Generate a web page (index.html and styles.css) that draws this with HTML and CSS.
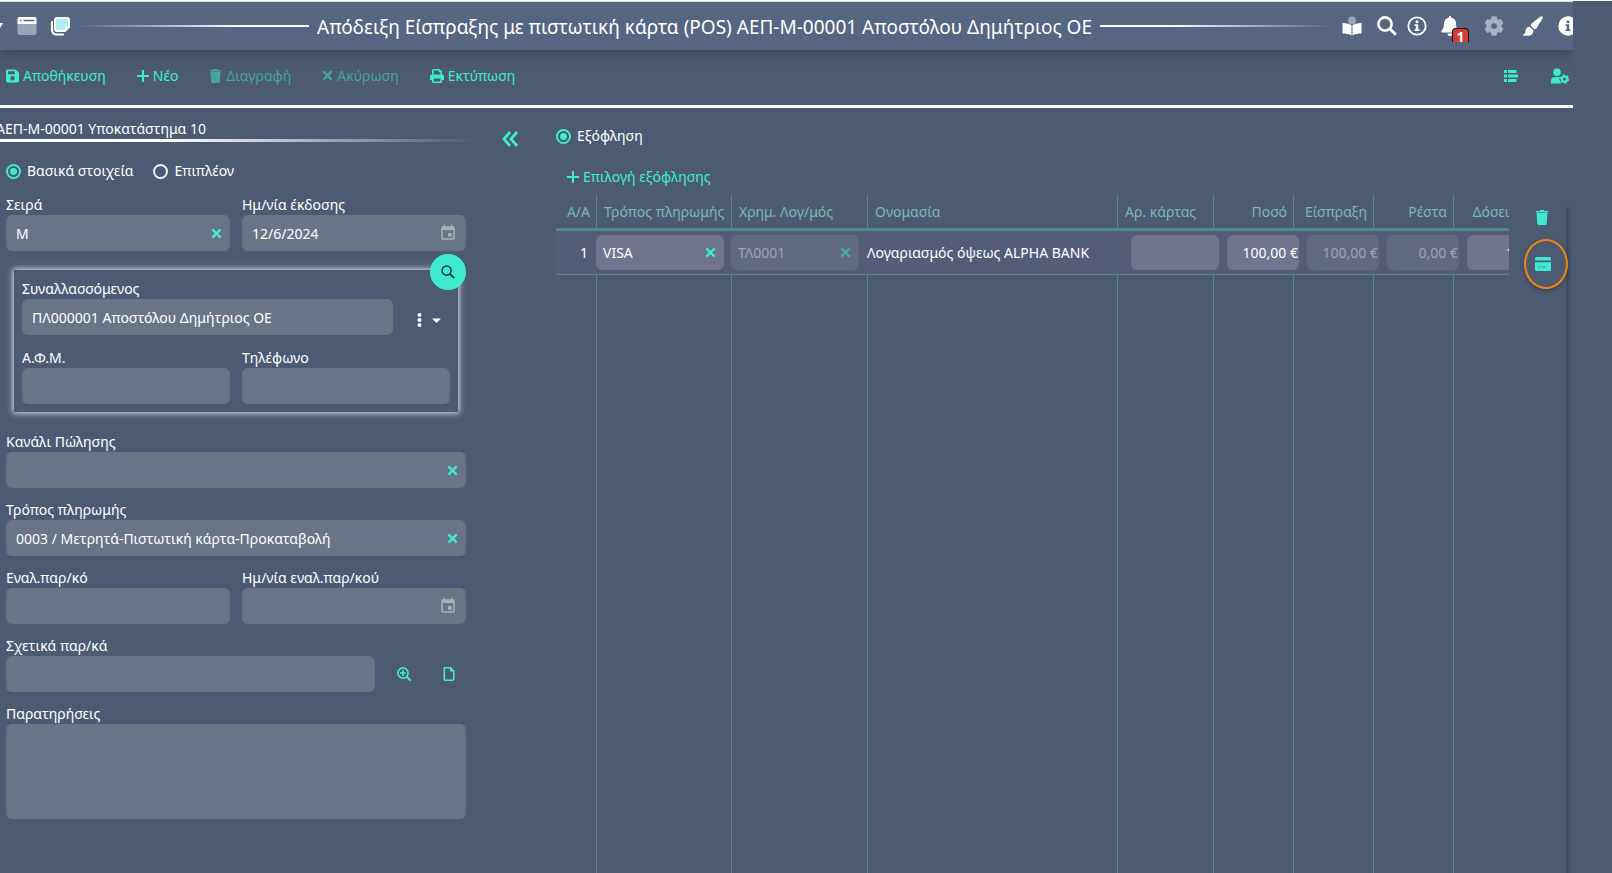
FILE: index.html
```html
<!DOCTYPE html>
<html lang="el">
<head>
<meta charset="utf-8">
<title>Απόδειξη Είσπραξης</title>
<link rel="stylesheet" href="styles.css">
</head>
<body>
<svg class="defs" aria-hidden="true">
  <symbol id="times" viewBox="0 0 12 12"><path d="M1.500 1.500l9 9M10.500 1.500l-9 9" stroke="currentColor" stroke-width="2.600" fill="none"/></symbol>
  <symbol id="plus" viewBox="0 0 12 12"><path d="M6 0.5v11M0.500 6h11" stroke="currentColor" stroke-width="2" fill="none" stroke-linecap="round"/></symbol>
  <symbol id="trash" viewBox="0 0 14 16"><path fill="currentColor" d="M.5 1h4l.6-1h3.800l.6 1h4v1.600H.5zM1.200 3.200h11.600l-.8 11.300a1.500 1.500 0 0 1-1.500 1.500H3.500A1.500 1.500 0 0 1 2 14.500z"/></symbol>
  <symbol id="calendar" viewBox="0 0 24 24"><path fill="currentColor" d="M17 12h-5v5h5v-5zM16 1v2H8V1H6v2H5c-1.110 0-1.990.9-1.990 2L3 19c0 1.100.89 2 2 2h14c1.100 0 2-.9 2-2V5c0-1.100-.9-2-2-2h-1V1h-2zm3 18H5V8h14v11z"/></symbol>
  <symbol id="search" viewBox="0 0 20 20"><circle cx="8" cy="8" r="6.600" fill="none" stroke="currentColor" stroke-width="2.600"/><path d="M12.800 12.800l6 6" stroke="currentColor" stroke-width="3"/></symbol>
</svg>

<header class="titlebar">
  <div class="title-left">
    <svg class="edge-caret" viewBox="0 0 3 6"><path d="M0 0h3L0 5z" fill="#fff"/></svg>
    <button class="icon-btn" aria-label="Παράθυρο"><svg viewBox="0 0 20 20"><rect x=".5" y="1" width="19" height="18" rx="2" fill="#9ba5b9"/><path d="M.5 8V3a2 2 0 0 1 2-2h15a2 2 0 0 1 2 2v5z" fill="#fff"/><path d="M3 4.500h1.500M6.500 4.500H17" stroke="#566582" stroke-width="1.600"/></svg></button>
    <button class="icon-btn" aria-label="Αντίγραφα"><svg viewBox="0 0 20 20"><path d="M2 6v8a4.500 4.500 0 0 0 4.500 4.500H13" fill="none" stroke="#fff" stroke-width="2.200" stroke-linecap="round"/><path d="M7 2h10a2 2 0 0 1 2 2v7l-4 4H7a2 2 0 0 1-2-2V4a2 2 0 0 1 2-2z" fill="#aeeef3" stroke="#fff" stroke-width="2"/><path d="M19 10.500h-4V15z" fill="#fff"/></svg></button>
  </div>
  <div class="title-mid">
    <span class="rule rule-in"></span>
    <h1 class="title">Απόδειξη Είσπραξης με πιστωτική κάρτα (POS) ΑΕΠ-Μ-00001 Αποστόλου Δημήτριος ΟΕ</h1>
    <span class="rule rule-out"></span>
  </div>
  <nav class="title-right">
    <button class="icon-btn at-book" aria-label="Οδηγός"><svg viewBox="0 0 20 20"><circle cx="10" cy="4.500" r="4" fill="#9ba5b9"/><path d="M.5 7c4 0 7 1 9 2.200V19.500C7 18 4 17.500.5 17.500zM19.500 7c-4 0-7 1-9 2.200V19.500c2.500-1.500 5.500-2 9-2z" fill="#fff"/></svg></button>
    <button class="icon-btn at-search" aria-label="Αναζήτηση"><svg viewBox="0 0 20 20"><use href="#search"/></svg></button>
    <button class="icon-btn at-info" aria-label="Πληροφορίες"><svg viewBox="0 0 20 20"><circle cx="10" cy="10" r="8.700" fill="none" stroke="#fff" stroke-width="1.800"/><circle cx="10" cy="5.800" r="1.500" fill="#fff"/><path d="M7.600 8.300h3.600v5h1.200v1.600H7.600v-1.600h1.200V9.900H7.600z" fill="#fff"/></svg></button>
    <button class="icon-btn at-bell" aria-label="Ειδοποιήσεις"><svg viewBox="0 0 20 20"><path d="M9 0h2v1.600c3 .5 5 2.900 5 6 0 4 1 5.600 2.400 7.100.6.700.2 1.800-.8 1.800H2.400c-1 0-1.400-1.100-.8-1.800C3 13.200 4 11.600 4 7.600c0-3.100 2-5.500 5-6zM7.500 17.500h5a2.500 2.500 0 0 1-5 0z" fill="#fff"/></svg><span class="badge">1</span></button>
    <button class="icon-btn at-gear" aria-label="Ρυθμίσεις"><svg viewBox="0 0 24 24"><path fill="#a9b1c1" stroke="#a9b1c1" stroke-linejoin="round" fill-rule="evenodd" d="M9.300 1h5.400l.6 3 1.900 1.100 2.900-1 2.700 4.700-2.300 2v2.400l2.300 2-2.700 4.700-2.900-1-1.900 1.100-.6 3H9.300l-.6-3-1.900-1.100-2.900 1-2.700-4.700 2.300-2v-2.400l-2.300-2 2.700-4.700 2.900 1L8.700 4zM12 8a4 4 0 1 0 0 8 4 4 0 0 0 0-8z"/></svg></button>
    <button class="icon-btn at-brush" aria-label="Θέμα"><svg viewBox="0 0 20 20"><path fill="#fff" d="M19.300.5c.7.600.7 1.300.3 2.100L14 11.400c-.7 1-1.500 1.500-2.600 1.800L7.600 9.600c.3-1 .8-1.700 1.700-2.500L17.500.5c.6-.5 1.200-.5 1.800 0zM6.600 10.700l3.800 3.500c0 3.600-2.300 5.600-5.700 5.600H.8c-.8 0-.9-1.200-.2-1.500 1.400-.6 1.800-1.300 1.900-3 .1-2.800 1.600-4.600 4.100-4.600z"/></svg></button>
    <button class="icon-btn at-help" aria-label="Βοήθεια"><svg viewBox="0 0 20 20"><circle cx="10" cy="10" r="9.700" fill="#fff"/><circle cx="10" cy="5.800" r="1.500" fill="#566582"/><path d="M7.600 8.300h3.600v5h1.200v1.600H7.600v-1.600h1.200V9.900H7.600z" fill="#566582"/></svg></button>
  </nav>
</header>

<div class="toolbar">
  <button class="tool"><svg class="i13" viewBox="0 0 14 14"><path fill="currentColor" fill-rule="evenodd" d="M1.500 0h8.700L14 3.600v8.900a1.500 1.500 0 0 1-1.500 1.500h-11A1.500 1.500 0 0 1 0 12.500v-11A1.500 1.500 0 0 1 1.500 0zM2.200 2v3h7.400V2zM7 7a2.400 2.400 0 1 0 0 4.800A2.400 2.400 0 0 0 7 7z"/></svg>Αποθήκευση</button>
  <button class="tool"><svg class="i12" viewBox="0 0 12 12"><use href="#plus"/></svg>Νέο</button>
  <button class="tool" disabled><svg class="i13" viewBox="0 0 14 16"><use href="#trash"/></svg>Διαγραφή</button>
  <button class="tool" disabled><svg class="i10" viewBox="0 0 12 12"><use href="#times"/></svg>Ακύρωση</button>
  <button class="tool"><svg class="i14" viewBox="0 0 14 14"><path fill="currentColor" fill-rule="evenodd" d="M2 5.500V1.500A1.500 1.500 0 0 1 3.500 0h6L12 2.400v3.100h.3A1.700 1.700 0 0 1 14 7.200V11h-2v1.700a1.300 1.300 0 0 1-1.300 1.300H3.300A1.300 1.300 0 0 1 2 12.700V11H0V7.200a1.700 1.700 0 0 1 1.700-1.700zM3.600 1.600v3.900h6.800V3.200H8.800V1.600zM3.600 9.500v2.900h6.800V9.500z"/></svg>Εκτύπωση</button>
  <div class="tool-right">
    <button class="plain" aria-label="Λίστα"><svg class="i14" viewBox="0 0 14 14"><path fill="currentColor" d="M0 1h3v3H0zM4 1h8.500v3H4zM0 5.500h3v3H0zM4 5.500h10v3H4zM0 10h3v3H0zM4 10h8.500v3H4z"/></svg></button>
    <button class="plain" aria-label="Ρυθμίσεις χρήστη"><svg class="i18" viewBox="0 0 18 16"><circle cx="6" cy="4.300" r="3.800" fill="currentColor"/><path fill="currentColor" d="M0 15.500v-2.500A4 4 0 0 1 4 9h5l-.8 2.500 2 4z"/><circle cx="13.500" cy="11" r="2.700" fill="none" stroke="currentColor" stroke-width="2.200"/><circle cx="13.500" cy="11" r="4" fill="none" stroke="currentColor" stroke-width="1.400" stroke-dasharray="2 2.190"/></svg></button>
  </div>
</div>

<main class="main">
  <section class="form">
    <h2 class="doc-title"><span>ΑΕΠ-Μ-00001 Υποκατάστημα 10</span></h2>
    <div class="doc-rule"></div>
    <div class="radios">
      <label class="radio"><input type="radio" name="tab" checked>Βασικά στοιχεία</label>
      <label class="radio"><input type="radio" name="tab">Επιπλέον</label>
    </div>
    <div class="row">
      <div class="field"><label for="series">Σειρά</label><div class="box"><input id="series" value="M"><button class="clear" aria-label="Καθαρισμός"><svg class="i10" viewBox="0 0 12 12"><use href="#times"/></svg></button></div></div>
      <div class="field"><label for="date">Ημ/νία έκδοσης</label><div class="box"><input id="date" value="12/6/2024"><button class="cal" aria-label="Ημερολόγιο"><svg class="i18" viewBox="0 0 24 24"><use href="#calendar"/></svg></button></div></div>
    </div>
    <div class="partner">
      <button class="fab" aria-label="Αναζήτηση συναλλασσόμενου"><svg class="i14" viewBox="0 0 20 20"><circle cx="8" cy="8" r="6.500" fill="none" stroke="#17333a" stroke-width="2.200"/><path d="M12.800 12.800l6 6" stroke="#17333a" stroke-width="2.600"/></svg></button>
      <div class="row partner-top">
        <div class="field"><label for="partner">Συναλλασσόμενος</label><div class="box"><input id="partner" value="ΠΛ000001 Αποστόλου Δημήτριος ΟΕ"></div></div>
        <button class="more" aria-label="Περισσότερα"><svg class="more-icon" viewBox="0 0 24 14"><g fill="#fff"><circle cx="2.500" cy="2" r="2"/><circle cx="2.500" cy="7" r="2"/><circle cx="2.500" cy="12" r="2"/><path d="M15 5.500h9L19.500 10z"/></g></svg></button>
      </div>
      <div class="row">
        <div class="field"><label for="afm">Α.Φ.Μ.</label><div class="box"><input id="afm"></div></div>
        <div class="field"><label for="tel">Τηλέφωνο</label><div class="box"><input id="tel"></div></div>
      </div>
    </div>
    <div class="stack">
      <div class="field"><label for="channel">Κανάλι Πώλησης</label><div class="box"><input id="channel"><button class="clear" aria-label="Καθαρισμός"><svg class="i10" viewBox="0 0 12 12"><use href="#times"/></svg></button></div></div>
      <div class="field"><label for="pay">Τρόπος πληρωμής</label><div class="box"><input id="pay" value="0003 / Μετρητά-Πιστωτική κάρτα-Προκαταβολή"><button class="clear" aria-label="Καθαρισμός"><svg class="i10" viewBox="0 0 12 12"><use href="#times"/></svg></button></div></div>
      <div class="row">
        <div class="field"><label for="alt">Εναλ.παρ/κό</label><div class="box"><input id="alt"></div></div>
        <div class="field"><label for="altdate">Ημ/νία εναλ.παρ/κού</label><div class="box"><input id="altdate"><button class="cal" aria-label="Ημερολόγιο"><svg class="i18" viewBox="0 0 24 24"><use href="#calendar"/></svg></button></div></div>
      </div>
      <div class="row related">
        <div class="field"><label for="rel">Σχετικά παρ/κά</label><div class="box"><input id="rel"></div></div>
        <div class="related-actions">
          <button class="plain" aria-label="Προβολή"><svg class="i14" viewBox="0 0 14 14"><circle cx="6" cy="6" r="5.100" fill="none" stroke="currentColor" stroke-width="1.600"/><path d="M6 3v6M3 6h6" stroke="currentColor" stroke-width="1.500"/><path d="M9.600 9.600l4 4" stroke="currentColor" stroke-width="2"/></svg></button>
          <button class="plain" aria-label="Νέο έγγραφο"><svg class="i14" viewBox="0 0 14 14"><path d="M2.300.8H8.700L11.700 4v8.200a1 1 0 0 1-1 1H3.300a1 1 0 0 1-1-1z" fill="none" stroke="currentColor" stroke-width="1.600"/><path d="M8 0v4.600h4.500z" fill="currentColor"/></svg></button>
        </div>
      </div>
      <div class="field"><label for="notes">Παρατηρήσεις</label><textarea id="notes"></textarea></div>
    </div>
  </section>

  <div class="splitter"><button class="plain" aria-label="Σύμπτυξη"><svg class="i16" viewBox="0 0 16 16"><path d="M8 1L2 8l6 7M15 1L9 8l6 7" fill="none" stroke="currentColor" stroke-width="2.800"/></svg></button></div>

  <section class="grid-panel">
    <label class="radio"><input type="radio" name="grid" checked>Εξόφληση</label>
    <button class="tool add"><svg class="i12" viewBox="0 0 12 12"><use href="#plus"/></svg>Επιλογή εξόφλησης</button>
    <div class="grid-body">
      <div class="table-wrap">
        <table class="grid">
          <colgroup><col class="c40"><col class="c135"><col class="c136"><col class="c250"><col class="c96"><col class="c80"><col class="c80"><col class="c80"><col class="c72"></colgroup>
          <thead><tr><th class="num">Α/Α</th><th>Τρόπος πληρωμής</th><th>Χρημ. Λογ/μός</th><th>Ονομασία</th><th>Αρ. κάρτας</th><th class="num">Ποσό</th><th class="num">Είσπραξη</th><th class="num">Ρέστα</th><th class="num">Δόσεις</th></tr></thead>
          <tbody>
            <tr class="data">
              <td class="num">1</td>
              <td><div class="cell w128"><input aria-label="Τρόπος πληρωμής" value="VISA"><button class="clear" aria-label="Καθαρισμός"><svg class="i10" viewBox="0 0 12 12"><use href="#times"/></svg></button></div></td>
              <td><div class="cell w128 off"><input aria-label="Χρηματικός λογαριασμός" value="ΤΛ0001" disabled><button class="clear" aria-label="Καθαρισμός" disabled><svg class="i10" viewBox="0 0 12 12"><use href="#times"/></svg></button></div></td>
              <td>Λογαριασμός όψεως ALPHA BANK</td>
              <td class="inset"><div class="cell w88"><input aria-label="Αριθμός κάρτας"></div></td>
              <td class="inset"><div class="cell w72 amount"><input aria-label="Ποσό" value="100,00 €"></div></td>
              <td class="inset"><div class="cell w72 amount off"><input aria-label="Είσπραξη" value="100,00 €" disabled></div></td>
              <td class="inset"><div class="cell w72 amount off"><input aria-label="Ρέστα" value="0,00 €" disabled></div></td>
              <td class="inset"><div class="cell w48 amount"><input aria-label="Δόσεις" value="1"></div></td>
            </tr>
            <tr class="filler"><td></td><td></td><td></td><td></td><td></td><td></td><td></td><td></td><td></td></tr>
          </tbody>
        </table>
      </div>
      <div class="row-actions">
        <button class="plain" aria-label="Διαγραφή γραμμής"><svg class="i16" viewBox="0 0 16 16"><use href="#trash" width="14" height="15"/></svg></button>
        <button class="plain marked" aria-label="Πληρωμή με κάρτα"><svg class="i16" viewBox="0 0 16 14"><path fill="currentColor" d="M1.500 0h13A1.500 1.500 0 0 1 16 1.500V3.500H0V1.500A1.500 1.500 0 0 1 1.500 0zM0 5.200h16v7.300a1.500 1.500 0 0 1-1.500 1.500h-13A1.500 1.500 0 0 1 0 12.500z"/><path d="M3 10h3M7 10h4" stroke="#2aa59b"/></svg></button>
      </div>
    </div>
  </section>
</main>
</body>
</html>
```
FILE: styles.css
```css
*, ::before, ::after { box-sizing: border-box; }
body {
  margin: 0;
  height: 100vh;
  min-height: 860px;
  display: flex;
  flex-direction: column;
  overflow: hidden;
  border-top: 1px solid #fff;
  background: #4d5a73;
  color: #fff;
  font-family: "Noto Sans", "Open Sans", sans-serif;
  font-size: 14px;
  line-height: 20px;
}
button, input, textarea { font: inherit; color: inherit; }
button { background: none; border: 0; padding: 0; display: inline-flex; align-items: center; }
svg { display: block; flex: none; }
.defs { position: absolute; width: 0; height: 0; }
.i10 { width: 11px; height: 11px; }
.i12 { width: 12px; height: 12px; }
.i13 { width: 13px; height: 14px; }
.i14 { width: 14px; height: 14px; }
.i16 { width: 16px; height: 16px; }
.i18 { width: 18px; height: 18px; }

.titlebar {
  flex: none;
  height: 49px;
  margin-right: 39px;
  display: flex;
  align-items: center;
  overflow: hidden;
  background: #566582;
  border-top: 1px solid #d5dae3;
  box-shadow: 0 2px 14px rgba(40, 48, 64, .6);
  clip-path: inset(0 0 -20px 0);
}
.title-left { display: flex; align-items: center; }
.edge-caret { width: 3px; height: 6px; margin-right: 14px; }
.icon-btn { position: relative; color: #fff; }
.icon-btn svg { width: 20px; height: 20px; }
.title-left .icon-btn + .icon-btn { margin-left: 13px; }
.title-mid { flex: 1; display: flex; align-items: center; gap: 8px; padding: 0 10px 0 7px; }
.title { margin: 0; padding-top: 2px; font-size: 19px; line-height: 28px; font-weight: 400; white-space: nowrap; }
.rule { flex: 1; height: 2px; }
.rule-in { background: linear-gradient(to right, transparent, #fff 70%); }
.rule-out { background: linear-gradient(to left, transparent, #fff 70%); }
.title-right { display: flex; align-items: center; margin-right: -5px; }
.at-search { margin-left: 15px; }
.at-info { margin-left: 10px; }
.at-bell { margin-left: 13px; }
.at-gear { margin-left: 24px; }
.at-brush { margin-left: 19px; }
.at-help { margin-left: 15px; }
.badge {
  position: absolute;
  left: 12px;
  top: 12px;
  width: 17px;
  height: 14px;
  overflow: hidden;
  background: #d63a36;
  border: 1px solid #111;
  border-bottom: 0;
  border-radius: 4px 4px 0 0;
  font-size: 14px;
  line-height: 16px;
  font-weight: 700;
  text-align: center;
}

.toolbar {
  flex: none;
  height: 58px;
  margin-right: 39px;
  padding: 0 4px 4px 6px;
  display: flex;
  align-items: center;
  gap: 31px;
  border-bottom: 3px solid #fff;
}
.tool { color: #3eebd1; gap: 4px; }
.tool:disabled { color: #45a3a1; }
.tool-right { margin-left: auto; display: flex; gap: 33px; }
.plain { color: #3eebd1; }

.main { flex: 1; display: flex; min-height: 0; }
.form { flex: none; width: 484px; padding: 11px 18px 0 6px; }
.doc-title { margin: 0; font-size: 14px; line-height: 20px; font-weight: 400; }
.doc-title span { margin-left: -10px; }
.doc-rule { height: 3px; margin: 0 -10px 0 -6px; background: linear-gradient(to right, #fff 35%, transparent); }
.radios { display: flex; gap: 20px; margin: 19px 0 14px; }
.radio { display: flex; align-items: center; gap: 6px; }
.radio input {
  appearance: none;
  margin: 0;
  width: 15px;
  height: 15px;
  border: 2px solid #f0f2f5;
  border-radius: 50%;
}
.radio input:checked { border-color: #3eebd1; background: radial-gradient(circle, #3eebd1 3px, transparent 4px); }

.row { display: flex; gap: 12px; }
.field { flex: 1; min-width: 0; }
.field > label { display: block; height: 20px; line-height: 20px; }
.box { display: flex; align-items: center; height: 36px; background: #6a7487; border-radius: 6px; }
.box input { flex: 1; min-width: 0; width: 0; height: 36px; padding: 0 10px; border: 0; background: none; outline: 0; }
.clear { color: #3eebd1; margin-right: 8px; }
.clear:disabled { color: #48a9a8; }
.cal { color: #a9b0b4; margin-right: 9px; }
textarea { display: block; width: 100%; height: 95px; border: 0; border-radius: 6px; background: #6a7487; resize: none; padding: 8px 10px; }

.partner { position: relative; margin: 19px 8px 20px; padding: 9px 8px 8px; box-shadow: 0 0 6px 1px #dfe5ee; }
.partner-top { margin-bottom: 13px; }
.partner-top .field { margin-right: 12px; }
.fab { position: absolute; right: -8px; top: -16px; width: 36px; height: 36px; border-radius: 50%; background: #3eebd1; justify-content: center; }
.more { padding: 25px 9px 0 0; }
.more-icon { width: 24px; height: 14px; }
.stack { display: flex; flex-direction: column; gap: 12px; }
.related { gap: 22px; }
.related-actions { display: flex; gap: 31px; padding: 20px 10px 0 0; }

.splitter { flex: none; width: 72px; padding: 23px 0 0 18px; }
.grid-panel { flex: 1; min-width: 0; display: flex; flex-direction: column; padding-top: 18px; }
.add { margin: 21px 0 8px 11px; align-self: flex-start; }
.grid-body { flex: 1; min-height: 0; display: flex; margin-right: 46px; box-shadow: 4px 12px 4px -1px #3c475b; clip-path: inset(0 -10px 0 0); background: #4d5a73; }
.table-wrap { flex: 1; min-width: 0; overflow: hidden; }
.grid { table-layout: fixed; border-collapse: separate; border-spacing: 0; width: 966px; height: 100%; }
.c40 { width: 40px; }
.c135 { width: 135px; }
.c136 { width: 136px; }
.c250 { width: 250px; }
.c96 { width: 96px; }
.c80 { width: 80px; }
.c72 { width: 69px; }
.grid th { height: 36px; padding: 0 6px 0 7px; text-align: left; font-weight: 400; color: #76b9b0; border-left: 1px solid #4f8c83; border-bottom: 3px solid #4f8c83; white-space: nowrap; }
.grid th:first-child, .filler td:first-child { border-left: 0; }
.grid .num { text-align: right; }
.data { background: #545c7a; }
.data td { height: 44px; padding: 0; border-bottom: 1px solid #4f8c83; white-space: nowrap; }
.data .num { padding-right: 8px; }
.data .inset { padding-left: 14px; }
.filler td { border-left: 1px solid #4f8c83; padding: 0; }
.cell { display: flex; align-items: center; height: 35px; background: #71748f; border-radius: 6px; }
.cell input { flex: 1; min-width: 0; width: 0; padding: 0 7px; border: 0; background: none; outline: 0; }
.off { background: #626983; color: #a0a4b3; }
.amount input { text-align: right; padding: 0 1px; }
.w128 { width: 128px; }
.w88 { width: 88px; }
.w72 { width: 72px; }
.w48 { width: 48px; }
.row-actions { flex: none; width: 57px; padding: 15px 0 0 26px; display: flex; flex-direction: column; align-items: flex-start; gap: 30px; }
.marked { position: relative; }
.marked::after {
  content: "";
  position: absolute;
  left: -11px;
  top: -17px;
  width: 44px;
  height: 50px;
  border: 2px solid #f58508;
  border-radius: 50%;
  box-shadow: 0 2px 4px rgba(30, 36, 50, .45);
}
```
